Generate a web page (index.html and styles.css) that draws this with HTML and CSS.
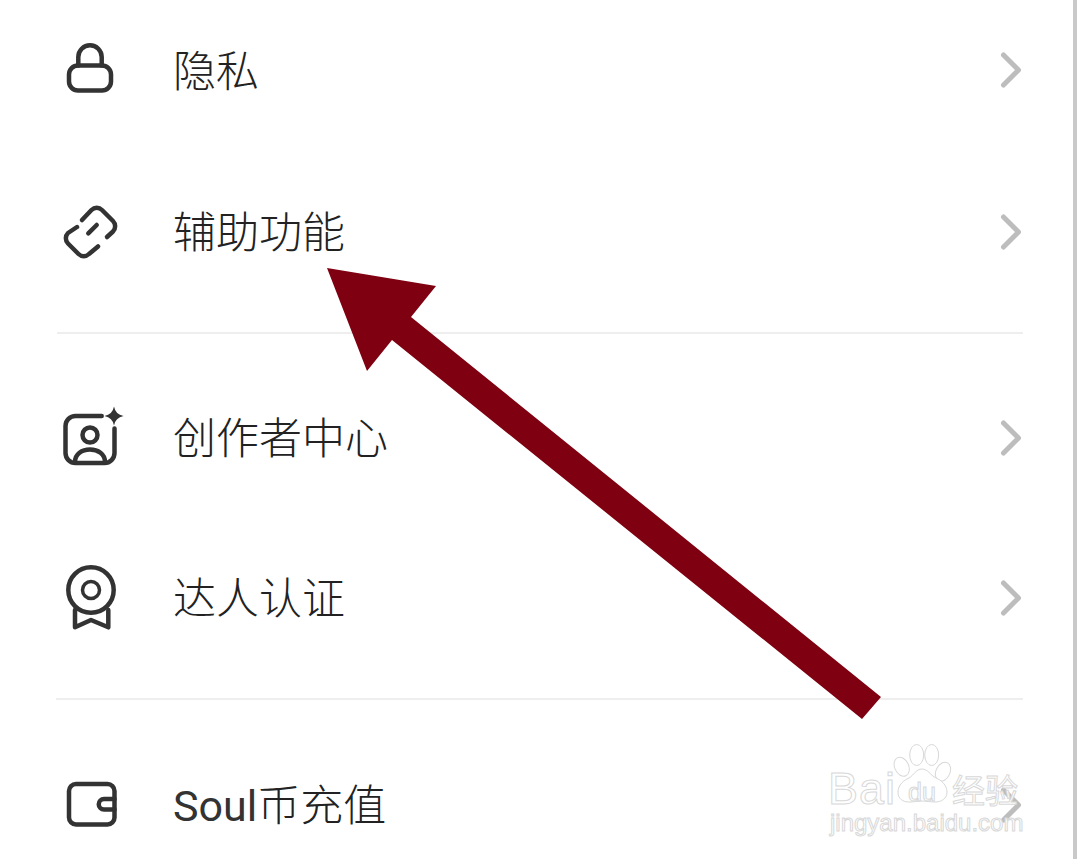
FILE: index.html
```html
<!DOCTYPE html>
<html lang="zh-CN">
<head>
    <meta charset="UTF-8">
    <title>设置</title>
    <link rel="stylesheet" href="styles.css">
</head>
<body>
    <div class="page">
        <div class="menu">
            <!-- first group -->
            <div class="row row-first">
                <svg class="icon" viewBox="0 0 70 70"><rect x="12" y="30.500" width="42" height="25" rx="9"/><path d="M21.300 30.500V22a11.700 11.700 0 0 1 23.400 0v8.500"/></svg>
                <span class="label">隐私</span>
                <svg class="chevron" viewBox="0 0 30 40"><path d="M8.500 5l15 15-15 15"/></svg>
            </div>
            <div class="row">
                <svg class="icon" viewBox="0 0 70 70"><path d="M25 23l9.500-10a7.500 7.500 0 0 1 10.500 0l11 11a7.500 7.500 0 0 1 0 10.500l-6 5.500"/><path d="M41 49.500L32 57a7.500 7.500 0 0 1-10.500 0L11 46.500a7.500 7.500 0 0 1 0-10.500l9-6"/><path d="M31.300 36.300l8.400-8.300"/></svg>
                <span class="label">辅助功能</span>
                <svg class="chevron" viewBox="0 0 30 40"><path d="M8.500 5l15 15-15 15"/></svg>
            </div>
            <div class="divider"></div>

            <!-- second group -->
            <div class="row">
                <svg class="icon" viewBox="0 0 70 70"><path d="M44.700 13H18.500a10 10 0 0 0-10 10v27a10 10 0 0 0 10 10h29a10 10 0 0 0 10-10V25.500"/><circle cx="33" cy="32" r="7.500"/><path d="M18 59c0-8 7-12.500 15-12.500S48 51 48 59"/><path class="star" d="M57 3.500q1.500 8 9.500 9.500q-8 1.500-9.500 9.500q-1.500-8-9.500-9.500q8-1.500 9.500-9.500z"/></svg>
                <span class="label">创作者中心</span>
                <svg class="chevron" viewBox="0 0 30 40"><path d="M8.500 5l15 15-15 15"/></svg>
            </div>
            <div class="row">
                <svg class="icon" viewBox="0 0 70 70"><circle cx="34" cy="27" r="22.700"/><circle class="thin" cx="34" cy="27" r="8.500"/><path d="M18 47v17.300L34 57l17.300 7.300V47"/></svg>
                <span class="label">达人认证</span>
                <svg class="chevron" viewBox="0 0 30 40"><path d="M8.500 5l15 15-15 15"/></svg>
            </div>
            <div class="divider divider-low"></div>

            <!-- third group -->
            <div class="row">
                <svg class="icon" viewBox="0 0 70 70"><rect x="12" y="14" width="45.500" height="40.500" rx="7"/><path d="M57.500 29H47a5.200 5.200 0 0 0 0 10.500h10.500"/></svg>
                <span class="label"><span class="latin">Soul</span>币充值</span>
                <svg class="chevron" viewBox="0 0 30 40"><path d="M8.500 5l15 15-15 15"/></svg>
            </div>
        </div>
        <div class="scrollbar"></div>
    </div>

    <!-- annotation arrow on top of the screenshot -->
    <svg class="arrow" viewBox="0 0 1080 859"><polygon points="327,268 436,286 411,317 881,697 862,719 392,340 367,371"/></svg>

    <!-- watermark -->
    <div class="watermark">
        <span class="wm-bai">Bai</span>
        <svg class="wm-paw" viewBox="0 0 64 64"><ellipse cx="10.700" cy="24.700" rx="7" ry="10" transform="rotate(-25 10.700 24.700)"/><ellipse cx="25.700" cy="13" rx="7" ry="10.500"/><ellipse cx="40.700" cy="13" rx="7" ry="10.500"/><ellipse cx="52" cy="29.700" rx="7" ry="10" transform="rotate(25 52 29.700)"/><path d="M31 27c6 0 8 6 14 9c5 2 11 7 11 14c0 7-6 10-12 10c-5 0-8-1-13-1s-8 1-13 1c-6 0-11-3-11-10c0-7 6-12 11-14c5-3 7-9 13-9z"/></svg>
        <span class="wm-du">du</span>
        <span class="wm-jy">经验</span>
        <span class="wm-url">jingyan.baidu.com</span>
    </div>
</body>
</html>
```

FILE: styles.css
```css
/* settings list */
body {
    margin: 0;
    background-color: #fff;
    font-family: 'Noto Sans CJK SC', sans-serif;
    color: #333;
    overflow: hidden;
}

.page {
    display: flex;
    height: 859px;
    overflow: hidden;
    padding-right: 3px;
}

.menu {
    flex: 1;
    margin-top: -8px;
}

.scrollbar {
    width: 4px;
    background-color: #c9c9c9;
}

.row {
    display: flex;
    align-items: center;
    height: 160px;
    padding-left: 57px;
    padding-right: 48px;
}

.row-first {
    height: 156px;
    margin-bottom: 4px;
}

.icon {
    width: 70px;
    height: 70px;
    flex: none;
    fill: none;
    stroke: #333;
    stroke-width: 4.5;
    stroke-linecap: round;
    stroke-linejoin: round;
}

.icon .star {
    fill: #333;
    stroke: none;
}

.icon .thin {
    stroke-width: 3.5;
}

.label {
    flex: 1;
    margin-left: 46px;
    padding-top: 2px;
    font-family: 'Roboto', 'Noto Sans CJK SC', sans-serif;
    font-size: 43px;
    font-weight: 300;
    line-height: 60px;
    color: #222;
}

.row-first .label {
    padding-top: 3px;
}

.latin {
    font-weight: 400;
    color: #333;
}

.chevron {
    width: 30px;
    height: 40px;
    flex: none;
    fill: none;
    stroke: #bdbdbd;
    stroke-width: 5;
    stroke-linecap: round;
    stroke-linejoin: round;
}

.divider {
    height: 2px;
    margin: 20px 50px 24px 57px;
    background-color: #eee;
}

.divider-low {
    margin-left: 56px;
    margin-bottom: 25px;
}

.arrow {
    position: absolute;
    left: 0;
    top: 0;
    width: 1080px;
    height: 859px;
    fill: #7f0010;
}

.watermark {
    position: absolute;
    left: 825px;
    top: 740px;
    width: 200px;
    height: 100px;
    color: #fff;
    -webkit-text-stroke: 1px #d8d8d8;
    font-family: 'Liberation Sans', sans-serif;
}

.watermark span {
    position: absolute;
    white-space: nowrap;
}

.wm-bai {
    left: 3px;
    top: 29px;
    font-size: 45px;
    letter-spacing: 1px;
    line-height: 40px;
}

.wm-paw {
    position: absolute;
    left: 66px;
    top: 2px;
    width: 64px;
    height: 64px;
    fill: #fff;
    stroke: #d8d8d8;
    stroke-width: 1;
}

.wm-du {
    left: 83px;
    top: 39px;
    font-size: 25px;
    line-height: 26px;
}

.wm-jy {
    left: 127px;
    top: 32px;
    font-family: 'Noto Sans CJK SC', sans-serif;
    font-size: 33px;
    line-height: 34px;
}

.wm-url {
    left: 5px;
    top: 70px;
    font-size: 24px;
    line-height: 26px;
}
```
